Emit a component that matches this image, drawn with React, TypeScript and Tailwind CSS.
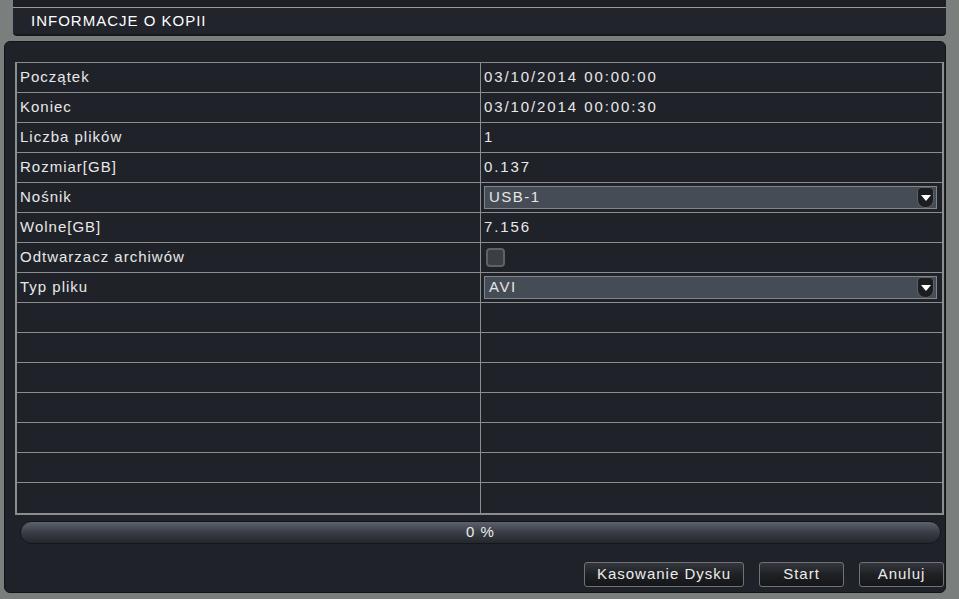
const rows: { label: string; value?: string; kind?: 'text' | 'select' | 'check' }[] = [
  { label: 'Początek', value: '03/10/2014 00:00:00' },
  { label: 'Koniec', value: '03/10/2014 00:00:30' },
  { label: 'Liczba plików', value: '1' },
  { label: 'Rozmiar[GB]', value: '0.137' },
  { label: 'Nośnik', value: 'USB-1', kind: 'select' },
  { label: 'Wolne[GB]', value: '7.156' },
  { label: 'Odtwarzacz archiwów', kind: 'check' },
  { label: 'Typ pliku', value: 'AVI', kind: 'select' },
];

const font = { fontFamily: '"Liberation Sans", Arial, sans-serif' };

function Select({ value }: { value: string }) {
  return (
    <div className="ml-[3px] mr-[5px] h-[23px] flex items-center justify-between border border-[#7f858b] bg-[#454c55]">
      <span className="pl-[4px] text-[15px] tracking-[1.5px] text-[#e6e6e6]">{value}</span>
      <div className="mr-[2px] w-[17px] h-[21px] flex items-center justify-center rounded-t-[4px] rounded-b-[8px] bg-[#1b1d22] border border-[#5c6167]">
        <svg width="10" height="6" viewBox="0 0 10 6">
          <path d="M0 0 L10 0 L5 6 Z" fill="#ffffff" />
        </svg>
      </div>
    </div>
  );
}

function Btn({ label, w }: { label: string; w: string }) {
  return (
    <button
      className={`${w} h-[25px] rounded-[3px] border border-[#6f7378] bg-gradient-to-b from-[#34373d] via-[#1f2125] to-[#151619] text-[15px] tracking-[1px] text-[#ececec]`}
    >
      {label}
    </button>
  );
}

export default function App() {
  const empty = Array.from({ length: 7 });
  return (
    <div className="w-[959px] h-[599px] bg-[#7a7f7d] overflow-hidden" style={font}>
      <div className="ml-[13px] w-[933px]">
        <div className="h-[7px] bg-[#1d1f24]" />
        <div className="h-[29px] flex items-center pl-[18px] bg-[#22242b] border-t border-[#969b9c] border-b-2 border-b-[#15171a] rounded-b-[4px] text-[15px] tracking-[1px] text-white">
          INFORMACJE O KOPII
        </div>
      </div>

      <div className="mt-[5px] ml-[4px] w-[942px] h-[552px] rounded-[6px] bg-[#202229] border border-[#131418] pl-[10px] pt-[20px]">
        <div className="w-[929px] border-x-2 border-t border-b-2 border-[#8c8d8f]">
          {rows.map((r, i) => (
            <div key={i} className="grid grid-cols-[464px_1fr] h-[30px] border-b border-[#8c8d8f]">
              <div className="border-r border-[#8c8d8f] flex items-center pl-[3px] text-[15px] tracking-[1px] text-[#e8e8e8]">
                {r.label}
              </div>
              <div className="flex flex-col justify-center">
                {r.kind === 'select' ? (
                  <Select value={r.value!} />
                ) : r.kind === 'check' ? (
                  <div className="ml-[5px] w-[19px] h-[19px] rounded-[4px] bg-[#3a3e45] border-2 border-[#5f6368]" />
                ) : (
                  <span className="pl-[3px] text-[15px] tracking-[1.9px] text-[#e8e8e8]">{r.value}</span>
                )}
              </div>
            </div>
          ))}
          {empty.map((_, i) => (
            <div
              key={'e' + i}
              className={`grid grid-cols-[464px_1fr] h-[30px] ${i < empty.length - 1 ? 'border-b border-[#8c8d8f]' : ''}`}
            >
              <div className="border-r border-[#8c8d8f]" />
              <div />
            </div>
          ))}
        </div>

        <div className="mt-[6px] ml-[5px] w-[921px] h-[23px] rounded-full border border-[#14161a] bg-gradient-to-b from-[#5c616c] via-[#393d45] to-[#24272d] flex items-center justify-center text-[15px] tracking-[1px] text-[#ececec]">
          0 %
        </div>

        <div className="mt-[18px] w-[929px] flex justify-end gap-[15px]">
          <Btn label="Kasowanie Dysku" w="w-[160px]" />
          <Btn label="Start" w="w-[85px]" />
          <Btn label="Anuluj" w="w-[85px]" />
        </div>
      </div>
    </div>
  );
}
